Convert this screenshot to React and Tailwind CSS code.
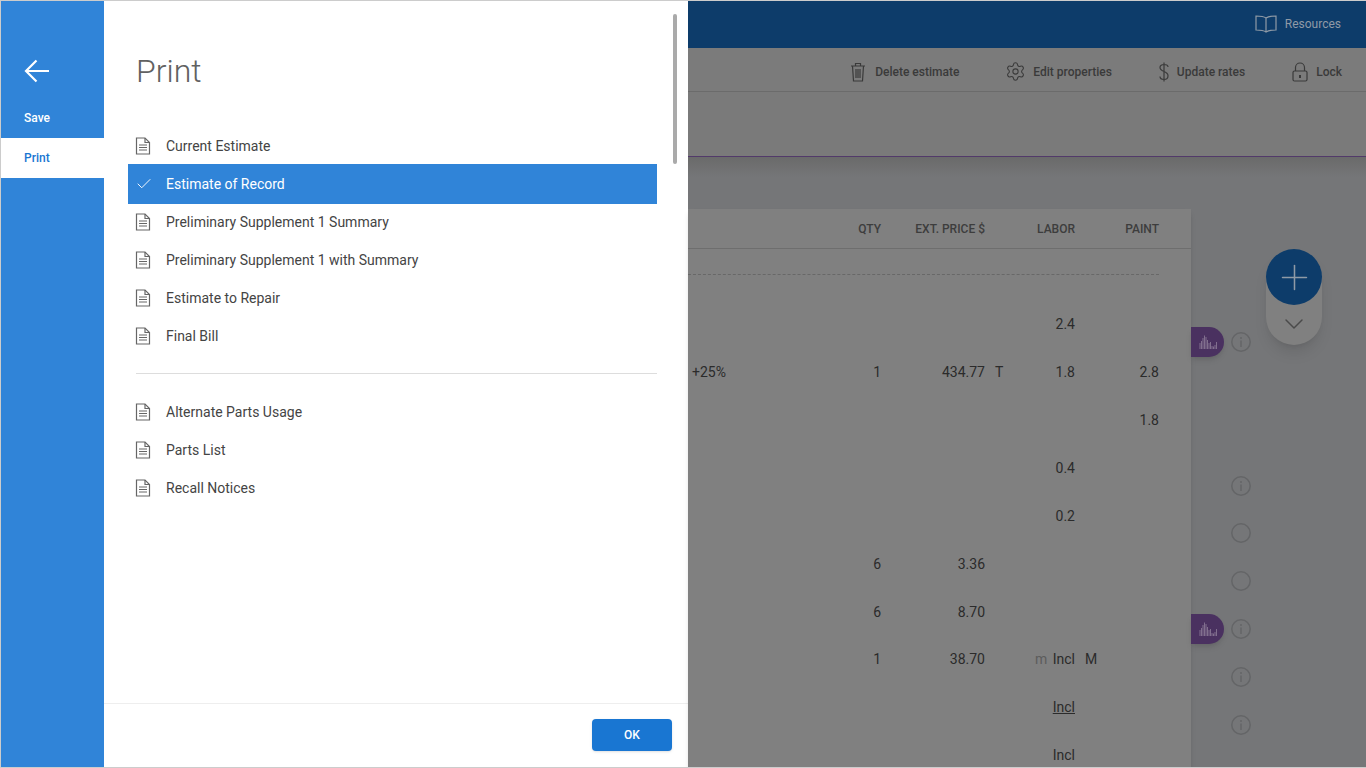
import { Check, ChevronDown, Plus, Settings } from "lucide-react";

const reports = ["Current Estimate", "Estimate of Record", "Preliminary Supplement 1 Summary", "Preliminary Supplement 1 with Summary", "Estimate to Repair", "Final Bill"];
const extras = ["Alternate Parts Usage", "Parts List", "Recall Notices"];

const rows = [
  { labor: "2.4" },
  { note: "+25%", qty: "1", price: "434.77", flag: "T", labor: "1.8", paint: "2.8" },
  { paint: "1.8" },
  { labor: "0.4" },
  { labor: "0.2" },
  { qty: "6", price: "3.36" },
  { qty: "6", price: "8.70" },
  { qty: "1", price: "38.70", pre: "m", labor: "Incl", post: "M" },
  { labor: "Incl", underline: true },
  { labor: "Incl" },
];

const sideRows = ["chart", "none", "none", "info", "circle", "circle", "chart", "info", "info"];

function DocIcon() {
  return (
    <svg width="16" height="18" viewBox="0 0 16 18" fill="none" stroke="#666" strokeWidth="1.2">
      <path d="M1.5 1h8.500l4.500 4.500v11.500h-13z" />
      <path d="M10 1v4.500h4.500M4 8h8M4 10.500h8M4 13h8" />
    </svg>
  );
}

function BackArrow() {
  return (
    <svg width="26" height="24" viewBox="0 0 26 24" fill="none" stroke="#fff" strokeWidth="2.2">
      <path d="M25 12H2M12.500 1.500 2 12l10.500 10.500" />
    </svg>
  );
}

function BookIcon() {
  return (
    <svg width="22" height="18" viewBox="0 0 22 18" fill="none" stroke="#8f9aa6" strokeWidth="1.2">
      <path d="M11 3C9 1.500 5 1 1 1v14c4 0 8 .5 10 2 2-1.500 6-2 10-2V1c-4 0-8 .5-10 2zM11 3v14" />
    </svg>
  );
}

function TrashIcon() {
  return (
    <svg width="16" height="20" viewBox="0 0 16 20" fill="none" stroke="#3a3a3a" strokeWidth="1.2">
      <path d="M1 4h14M5.500 4V1.500h5V4M2.500 4l1 15h9l1-15M6 7v9M8 7v9M10 7v9" />
    </svg>
  );
}

function DollarIcon() {
  return (
    <svg width="10" height="20" viewBox="0 0 10 20" fill="none" stroke="#3a3a3a" strokeWidth="1.2">
      <path d="M5 0.500v19M9 5C9 3.300 7.300 2.500 5 2.500S1 3.500 1 5.500 2.800 8.600 5 9.500s4 1.900 4 4.200-1.800 3.800-4 3.800-4-1.200-4-3" />
    </svg>
  );
}

function LockIcon() {
  return (
    <svg width="16" height="20" viewBox="0 0 16 20" fill="none" stroke="#3a3a3a" strokeWidth="1.2">
      <path d="M3.500 9V5.500a4.500 4.500 0 0 1 9 0V9" />
      <rect x="1" y="9" width="14" height="10" rx="1.500" />
      <path d="M8 13v3" strokeWidth="2" />
    </svg>
  );
}

function ChartPill() {
  return (
    <div className="flex h-[30px] w-[33px] items-center justify-center rounded-r-[15px] bg-[#4a3160] shadow-md">
      <svg width="18" height="14" viewBox="0 0 18 14" fill="none" stroke="#8f7f9b" strokeWidth="0.8">
        <path d="M1 14V8M2.500 14V6M4 14V3M5.500 14V0.500M7 14V2M8.500 14V5M10 14V8M11.500 14V7M13 14V11M14.500 14V11.500M16 14V10M17.500 14V7" />
      </svg>
    </div>
  );
}

function SideMark({ kind }) {
  if (kind === "none") return null;
  return (
    <svg width="20" height="20" viewBox="0 0 20 20" fill="none" stroke="#646567" strokeWidth="1.5">
      <circle cx="10" cy="10" r="9.200" />
      {kind === "info" && <path d="M10 8.500v6.500M10 5v2" />}
    </svg>
  );
}

function ToolAction({ icon, label, className }) {
  return (
    <div className={`flex items-center text-xs font-medium text-[#3a3a3a] ${className}`}>
      {icon}
      <span>{label}</span>
    </div>
  );
}

export default function App() {
  return (
    <div className="flex h-[768px] w-[1366px] overflow-hidden border-y border-[#cccccc] font-[Roboto,sans-serif]">
      {/* Print dialog */}
      <div className="relative flex w-[688px] shrink-0 border-l border-[#cccccc] bg-white">
        <aside className="flex w-[103px] shrink-0 flex-col bg-[#3084d8] text-xs font-medium">
          <div className="flex h-[97px] items-center pl-[23px] pt-[43px]">
            <BackArrow />
          </div>
          <div className="flex h-10 items-center pl-[23px] text-white">Save</div>
          <div className="flex h-10 items-center bg-white pl-[23px] text-[#1976d2]">Print</div>
        </aside>

        <main className="flex min-w-0 flex-1 flex-col">
          <h1 className="h-[126px] pl-8 pt-[50px] text-[32px] font-light leading-10 text-[#616161]">Print</h1>

          <ul className="ml-6 w-[529px] text-sm text-[#444444]">
            {reports.map((name, i) =>
              i === 1 ? (
                <li key={name} className="relative z-10 -my-px flex h-10 items-center bg-[#3084d8] text-white">
                  <span className="flex w-[38px] justify-center pr-[7px]">
                    <Check size={18} strokeWidth={1.25} />
                  </span>
                  {name}
                </li>
              ) : (
                <li key={name} className="flex h-[38px] items-center">
                  <span className="flex w-[38px] justify-center pr-[8px]">
                    <DocIcon />
                  </span>
                  {name}
                </li>
              )
            )}
          </ul>

          <div className="ml-8 mb-[19px] mt-[18px] h-px w-[521px] bg-[#dddddd]" />

          <ul className="ml-6 w-[529px] text-sm text-[#444444]">
            {extras.map((name) => (
              <li key={name} className="flex h-[38px] items-center">
                <span className="flex w-[38px] justify-center pr-[8px]">
                  <DocIcon />
                </span>
                {name}
              </li>
            ))}
          </ul>

          <div className="flex-1" />
          <footer className="flex h-16 justify-end border-t border-[#eeeeee] pr-4 pt-[15px]">
            <button className="h-8 w-20 rounded bg-[#1976d2] text-xs font-medium text-white shadow-sm">OK</button>
          </footer>
        </main>

        <div className="absolute left-[672px] top-[13px] h-[150px] w-1 rounded-full bg-[#aaaaaa]" />
      </div>

      {/* Dimmed estimate page */}
      <div className="relative flex min-w-0 flex-1 flex-col bg-[#757678]">
        <header className="flex h-[47px] shrink-0 items-center justify-end gap-2 bg-[#0d3c6a] pb-px pr-[25px] text-xs text-[#8f9aa6]">
          <BookIcon />
          <span>Resources</span>
        </header>

        <div className="flex h-11 shrink-0 items-center justify-end border-b border-[#6b6b6b] bg-[#7b7b7b] pr-[24px] pt-1">
          <ToolAction icon={<TrashIcon />} label="Delete estimate" className="mr-[46px] gap-[9px]" />
          <ToolAction icon={<Settings size={21} strokeWidth={1.2} />} label="Edit properties" className="mr-[47px] gap-[7px]" />
          <ToolAction icon={<DollarIcon />} label="Update rates" className="mr-[47px] gap-2" />
          <ToolAction icon={<LockIcon />} label="Lock" className="gap-2" />
        </div>

        <div className="h-[65px] shrink-0 border-b border-[#523a6a] bg-[#7a7a7a]" />
        <div className="h-5 shrink-0 bg-linear-to-b from-[#6a6a6a] to-[#757678]" />

        <div className="flex items-start pt-[32px]">
          <section className="w-[503px] shrink-0 bg-[#808080] shadow-md">
            <div className="grid h-10 grid-cols-[153px_40px_104px_45px_45px_84px] items-center border-b border-[#6e6e6e] text-right text-xs font-medium text-[#3d3d3d]">
              <span />
              <span>QTY</span>
              <span>EXT. PRICE $</span>
              <span />
              <span>LABOR</span>
              <span>PAINT</span>
            </div>
            <div className="mr-8 mt-[25px] border-t border-dashed border-[#686868]" />
            <div className="mt-[25.4px] text-sm text-[#2b2b2b]">
              {rows.map((row, i) => (
                <div key={i} className="grid h-[47.875px] grid-cols-[153px_40px_104px_64px_26px_84px] items-center">
                  <span className="pl-1">{row.note}</span>
                  <span className="text-right">{row.qty}</span>
                  <span className="text-right">{row.price}</span>
                  <span className={row.pre ? "pl-[50px] text-[#5c5c5c]" : "pl-[10px]"}>{row.flag || row.pre}</span>
                  <span className={`flex justify-end whitespace-nowrap ${row.underline ? "underline" : ""}`}>{row.labor}</span>
                  <span className="flex justify-between pl-[10px]">
                    <span>{row.post}</span>
                    <span>{row.paint}</span>
                  </span>
                </div>
              ))}
            </div>
          </section>

          <div className="mt-[109px] flex flex-col">
            {sideRows.map((kind, i) => (
              <div key={i} className="flex h-[47.875px] w-[64px] items-center">
                <div className="w-[33px]">{kind === "chart" && <ChartPill />}</div>
                <div className="ml-[7px]">
                  <SideMark kind={kind === "chart" ? "info" : kind} />
                </div>
              </div>
            ))}
          </div>
        </div>

        <div className="absolute left-[578px] top-[248px] flex h-24 w-14 flex-col items-center rounded-full bg-[#808080] shadow-lg">
          <div className="flex h-14 w-14 shrink-0 items-center justify-center rounded-full bg-[#0d3c6a] text-[#8f9aa6]">
            <Plus size={41} strokeWidth={0.9} />
          </div>
          <ChevronDown size={32} strokeWidth={1.1} className="mt-[3px] text-[#4a4a4a]" />
        </div>
      </div>
    </div>
  );
}
